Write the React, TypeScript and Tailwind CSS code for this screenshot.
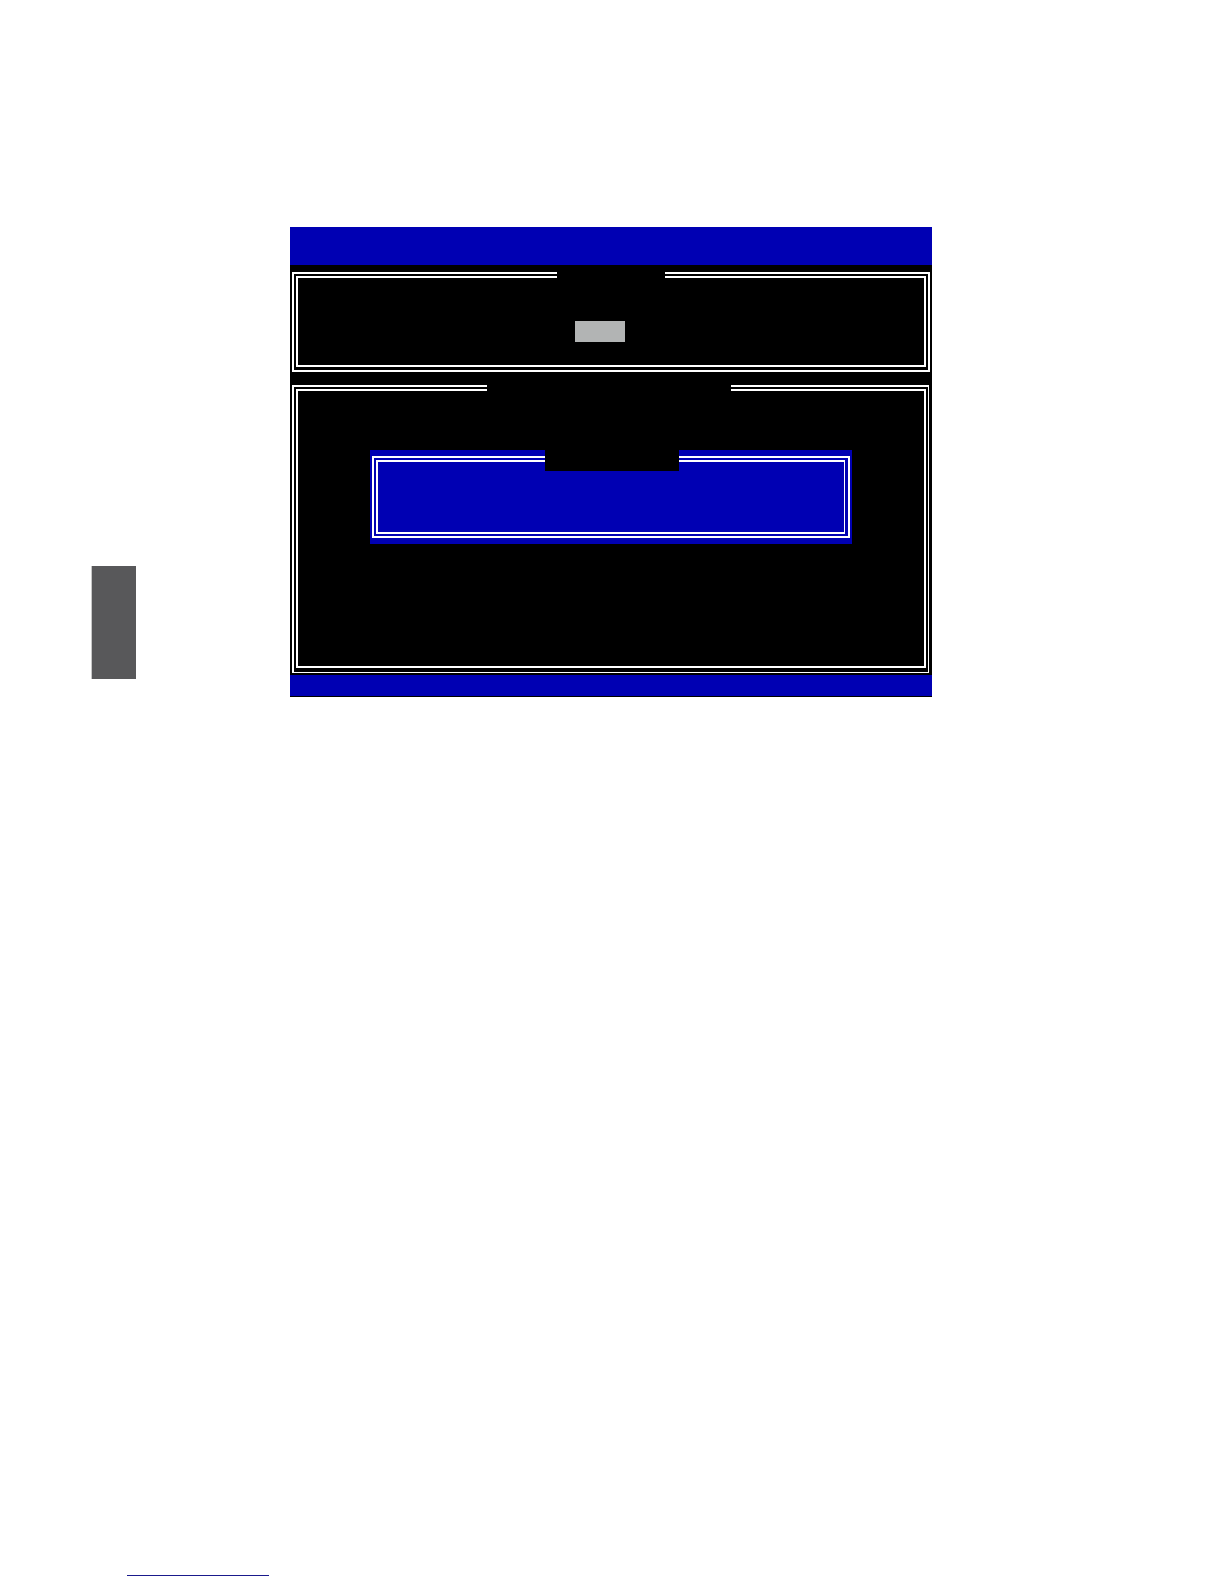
import type { ReactNode } from "react";

type FrameProps = {
  label: string;
  outer: string;
  inner: string;
  gap: string;
  children?: ReactNode;
};

// Double-line text-mode frame whose top edge is interrupted by a title area.
function Frame({ label, outer, inner, gap, children }: FrameProps) {
  return (
    <section aria-label={label} className={`relative border-white ${outer}`}>
      <div className={`border-white ${inner}`}>{children}</div>
      <div className={`absolute bg-black ${gap}`} />
    </section>
  );
}

export default function App() {
  return (
    <div className="flex min-h-screen flex-col bg-white font-['Liberation_Sans',sans-serif]">
      <main className="flex items-start pt-[227px] pl-[91px]">
        <aside
          aria-label="Chapter"
          className="mt-[339px] h-[113px] w-[45px] shrink-0 border-l border-[#c8c8c8] bg-[#58585a]"
        />
        <div className="ml-[154px] w-full max-w-[642px] bg-black pb-px">
          <header className="h-[38px] bg-[#0000b3]" />
          <div className="flex flex-col gap-[13px] pt-[7px] pr-[2px] pb-[2px] pl-[2px]">
            <Frame
              label="Menu"
              outer="border-2 px-[2px] pt-[2px] pb-[3px]"
              inner="border-2 pt-[43px] pb-[23px] pl-[277px]"
              gap="-top-[7px] left-[263px] right-[263px] h-[20px]"
            >
              <button
                type="button"
                aria-label="Selected item"
                className="block h-[21px] w-[50px] bg-[#b2b4b4]"
              />
            </Frame>
            <Frame
              label="Details"
              outer="mr-px border-t-2 border-r border-b border-l-2 pt-[2px] pr-[2px] pb-[4px] pl-[2px]"
              inner="border-2 px-[72px] pt-[59px] pb-[122px]"
              gap="-top-[2px] left-[193px] right-[197px] h-[10px]"
            >
              <div role="dialog" aria-label="Message" className="bg-[#0000b3] px-[2px] py-[6px]">
                <Frame
                  label="Message"
                  outer="border-2 pt-[2px] pr-[3px] pb-[2px] pl-[2px]"
                  inner="h-[74px] border-t-2 border-r border-b-2 border-l-2"
                  gap="-top-[8px] left-[171px] right-[169px] h-[21px]"
                />
              </div>
            </Frame>
          </div>
          <footer className="h-[21px] bg-[#0000b3]" />
        </div>
      </main>
      <footer className="mt-auto pb-[8px] pl-[127px]">
        <a
          href="#top"
          aria-label="Back to contents"
          className="block h-[14px] w-[142px] border-b border-[#1a1a8c]"
        />
      </footer>
    </div>
  );
}
